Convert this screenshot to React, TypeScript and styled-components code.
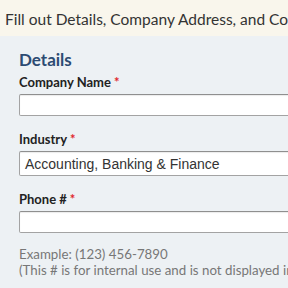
import React from "react";
import styled, { createGlobalStyle } from "styled-components";

const Global = createGlobalStyle`
  html, body { margin: 0; padding: 0; overflow: hidden; }
  body { font-family: Lato, "Open Sans", sans-serif; background: #edf1f4; width: 288px; height: 288px; }
`;

const Banner = styled.div`
  height: 36px;
  background: #f9f6ec;
  display: flex;
  align-items: center;
  padding: 1px 0 0 5px;
  box-sizing: border-box;
  font-size: 15.5px;
  color: #333;
  white-space: nowrap;
  overflow: hidden;
`;

const Panel = styled.div`
  background: #edf1f4;
  padding: 14px 0 0 19px;
  height: 252px;
  box-sizing: border-box;
  overflow: hidden;
`;

const Heading = styled.h2`
  margin: 0;
  font-size: 17px;
  line-height: 20px;
  font-weight: 700;
  color: #2c4b72;
`;

const Field = styled.div<{ $first?: boolean }>`
  margin-top: ${(p) => (p.$first ? "4px" : "15px")};
  display: flex;
  flex-direction: column;
`;

const Label = styled.label`
  font-size: 13px;
  line-height: 16px;
  font-weight: 700;
  color: #222;
  margin-bottom: 4px;
`;

const Req = styled.span`
  color: #e0262b;
  margin-left: 3px;
`;

const Input = styled.div<{ $h: number }>`
  width: 400px;
  height: ${(p) => p.$h}px;
  box-sizing: border-box;
  background: #fff;
  border: 1px solid #a3a3a3;
  border-top-color: #8f8f8f;
  border-radius: 2px;
  box-shadow: inset 0 1px 1px rgba(0,0,0,0.08);
  font-family: "Liberation Sans", Arial, sans-serif;
  font-size: 14px;
  color: #333;
  display: flex;
  align-items: center;
  padding-left: 5px;
`;

const Help = styled.div`
  margin-top: 13px;
  font-size: 13.3px;
  line-height: 16px;
  color: #777;
  white-space: nowrap;
`;

export default function App() {
  return (
    <>
      <Global />
      <Banner>Fill out Details, Company Address, and Contact Information</Banner>
      <Panel>
        <Heading>Details</Heading>
        <Field $first>
          <Label>Company Name<Req>*</Req></Label>
          <Input $h={22} />
        </Field>
        <Field>
          <Label>Industry<Req>*</Req></Label>
          <Input $h={25}>Accounting, Banking &amp; Finance</Input>
        </Field>
        <Field>
          <Label>Phone #<Req>*</Req></Label>
          <Input $h={22} />
        </Field>
        <Help>
          Example: (123) 456-7890
          <br />
          (This # is for internal use and is not displayed in your profile)
        </Help>
      </Panel>
    </>
  );
}
